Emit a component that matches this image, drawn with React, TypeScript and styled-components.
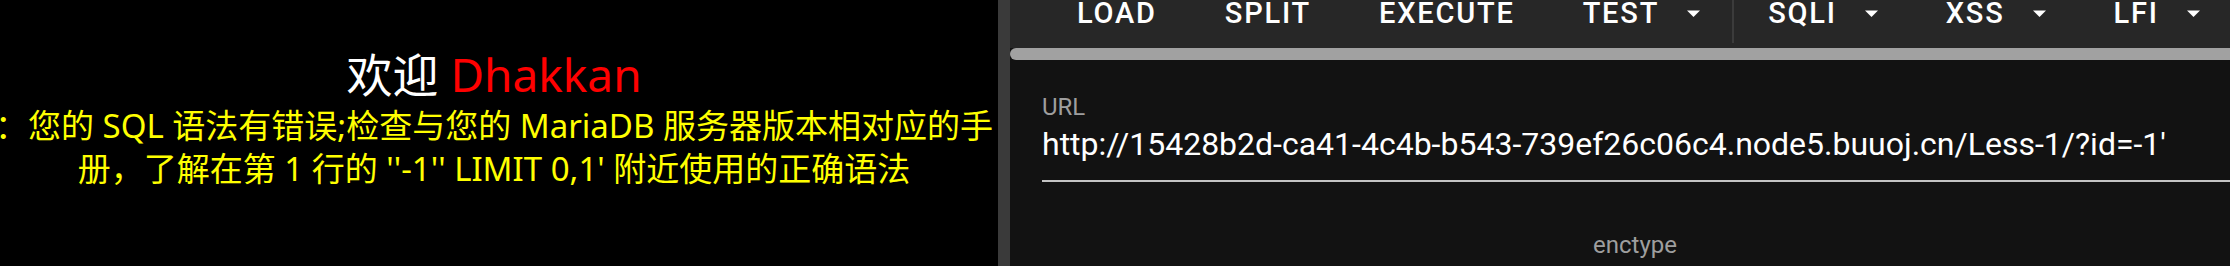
import React from "react";
import styled, { createGlobalStyle } from "styled-components";

const GlobalStyle = createGlobalStyle`
  html, body {
    margin: 0;
    padding: 0;
    background: #000;
    overflow: hidden;
  }
`;

const Screen = styled.div`
  display: flex;
  width: 2230px;
  height: 266px;
  overflow: hidden;
`;

const PagePane = styled.div`
  width: 998px;
  flex: none;
  box-sizing: border-box;
  padding: 44px 10px 0 0;
  background: #000;
  display: flex;
  flex-direction: column;
  align-items: center;
  text-align: center;
  font-family: "Noto Sans", "Noto Sans CJK SC", sans-serif;
`;

const Welcome = styled.div`
  font-size: 46px;
  line-height: 60px;
  color: #fff;
  white-space: nowrap;
`;

const Name = styled.span`
  color: #ff0000;
`;

const ErrorText = styled.div`
  font-size: 33px;
  line-height: 43px;
  color: #ffff00;
  white-space: nowrap;
`;

const Splitter = styled.div`
  width: 12px;
  flex: none;
  background: #3a3a3a;
`;

const ToolPane = styled.div`
  flex: 1;
  display: flex;
  flex-direction: column;
  background: #121212;
  font-family: Roboto, "Liberation Sans", sans-serif;
  min-width: 0;
`;

const Toolbar = styled.div`
  height: 48px;
  flex: none;
  background: #272727;
  display: flex;
  align-items: flex-start;
  padding-left: 67px;
  gap: 68px;
`;

const ToolButton = styled.div`
  display: flex;
  align-items: center;
  gap: 28px;
  height: 26px;
  font-size: 29px;
  line-height: 26px;
  font-weight: 500;
  letter-spacing: 1.8px;
  color: #fff;
  text-transform: uppercase;
  white-space: nowrap;
`;

const Divider = styled.div`
  width: 2px;
  height: 43px;
  flex: none;
  background: #3b3b3b;
  margin: 0 -34px 0 -36px;
`;

const ScrollBar = styled.div`
  height: 12px;
  flex: none;
  background: #a1a1a1;
  border-radius: 6px 0 0 6px;
`;

const Field = styled.div`
  margin: 35px 0 0 32px;
  padding-bottom: 17px;
  border-bottom: 2px solid #c4c4c4;
  display: flex;
  flex-direction: column;
  gap: 6px;
`;

const FieldLabel = styled.div`
  font-size: 24px;
  line-height: 24px;
  color: #9e9e9e;
`;

const FieldValue = styled.div`
  font-size: 32px;
  line-height: 38px;
  color: #fff;
  white-space: nowrap;
`;

const OptionsRow = styled.div`
  display: flex;
  justify-content: center;
  padding-left: 30px;
  margin-top: 51px;
`;

const Arrow = () => (
  <svg width="13" height="7" viewBox="0 0 13 7" aria-hidden="true">
    <path d="M0 0.5h13L6.5 7z" fill="#fff" />
  </svg>
);

const Menu = ({ label }: { label: string }) => (
  <ToolButton>
    {label}
    <Arrow />
  </ToolButton>
);

export default function App() {
  return (
    <>
      <GlobalStyle />
      <Screen>
        <PagePane>
          <Welcome>
            欢迎 <Name>Dhakkan</Name>
          </Welcome>
          <ErrorText>
            ：您的 SQL 语法有错误;检查与您的 MariaDB 服务器版本相对应的手
            <br />
            册，了解在第 1 行的 ''-1'' LIMIT 0,1' 附近使用的正确语法
          </ErrorText>
        </PagePane>
        <Splitter />
        <ToolPane>
          <Toolbar>
            <ToolButton>Load</ToolButton>
            <ToolButton>Split</ToolButton>
            <ToolButton>Execute</ToolButton>
            <Menu label="Test" />
            <Divider />
            <Menu label="SQLI" />
            <Menu label="XSS" />
            <Menu label="LFI" />
          </Toolbar>
          <ScrollBar />
          <Field>
            <FieldLabel>URL</FieldLabel>
            <FieldValue>http://15428b2d-ca41-4c4b-b543-739ef26c06c4.node5.buuoj.cn/Less-1/?id=-1'</FieldValue>
          </Field>
          <OptionsRow>
            <FieldLabel>enctype</FieldLabel>
          </OptionsRow>
        </ToolPane>
      </Screen>
    </>
  );
}
